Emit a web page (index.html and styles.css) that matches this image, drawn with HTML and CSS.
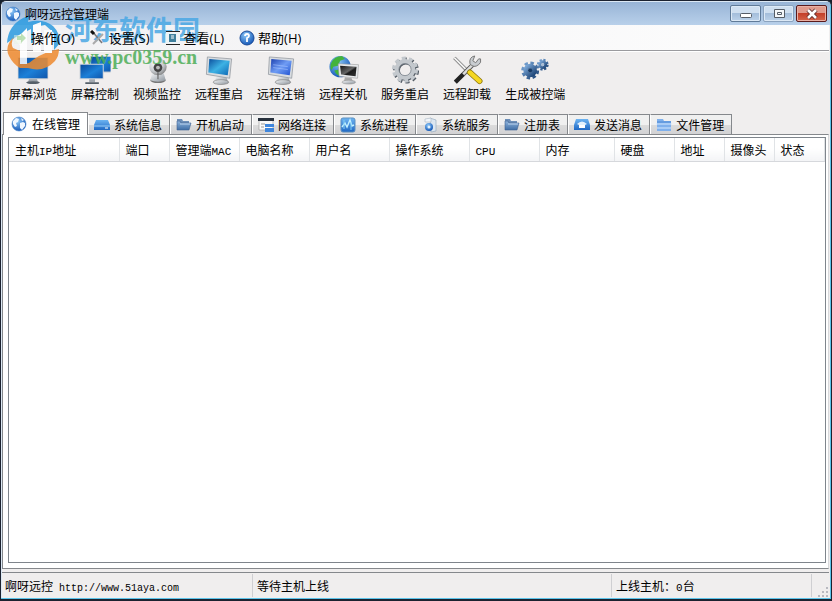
FILE: index.html
```html
<!DOCTYPE html>
<html lang="zh-CN">
<head>
    <meta charset="UTF-8">
    <meta name="viewport" content="width=device-width, initial-scale=1.0">
    <title>啊呀远控管理端</title>
    <link rel="stylesheet" href="styles.css">
</head>
<body>
    <!-- 公用渐变和图标 -->
    <svg class="sprite" aria-hidden="true">
        <defs>
            <linearGradient id="screen" x1="0" y1="0" x2="1" y2="1">
                <stop offset="0" stop-color="#0a4a9c"/>
                <stop offset=".55" stop-color="#1c80d8"/>
                <stop offset="1" stop-color="#0f56ac"/>
            </linearGradient>
            <linearGradient id="aqua" x1="0" y1="0" x2="1" y2="1">
                <stop offset="0" stop-color="#0b4d9c"/>
                <stop offset=".5" stop-color="#3db2e4"/>
                <stop offset="1" stop-color="#0c66b4"/>
            </linearGradient>
            <linearGradient id="indigo" x1="0" y1="0" x2="1" y2="1">
                <stop offset="0" stop-color="#1c3fae"/>
                <stop offset=".5" stop-color="#6f9cf4"/>
                <stop offset="1" stop-color="#1d50d0"/>
            </linearGradient>
            <linearGradient id="dark" x1="0" y1="0" x2="1" y2="1">
                <stop offset="0" stop-color="#111"/>
                <stop offset=".5" stop-color="#666"/>
                <stop offset=".6" stop-color="#1c1c1c"/>
                <stop offset="1" stop-color="#333"/>
            </linearGradient>
            <linearGradient id="silver" x1="0" y1="0" x2="1" y2="1">
                <stop offset="0" stop-color="#f4f6f8"/>
                <stop offset="1" stop-color="#8c949c"/>
            </linearGradient>
            <linearGradient id="folder" x1="0" y1="0" x2="0" y2="1">
                <stop offset="0" stop-color="#8fb4dc"/>
                <stop offset="1" stop-color="#3f6ea6"/>
            </linearGradient>
            <linearGradient id="drive" x1="0" y1="0" x2="0" y2="1">
                <stop offset="0" stop-color="#6db4f2"/>
                <stop offset="1" stop-color="#1f68c4"/>
            </linearGradient>
            <linearGradient id="gear" x1="0" y1="0" x2="1" y2="1">
                <stop offset="0" stop-color="#7aa6d6"/>
                <stop offset="1" stop-color="#1f4678"/>
            </linearGradient>
            <radialGradient id="globe" cx=".4" cy=".3" r=".75">
                <stop offset="0" stop-color="#8cc8f8"/>
                <stop offset="1" stop-color="#0f52b4"/>
            </radialGradient>
            <radialGradient id="ball" cx=".35" cy=".3" r=".8">
                <stop offset="0" stop-color="#fff"/>
                <stop offset=".6" stop-color="#c4c8cc"/>
                <stop offset="1" stop-color="#777"/>
            </radialGradient>
        </defs>
        <symbol id="i-globe" viewBox="0 0 16 16">
            <circle cx="8" cy="8" r="7" fill="url(#globe)" stroke="#4a84c8" stroke-width=".6"/>
            <path d="M2 5l3-3 3 1-1 3-2 1 1 3-2 1-2-3zM9 7l3-1 2 1 0 3-3 4-2-2zM10 2l3 2-2 1z" fill="#f0f7ff"/>
        </symbol>
        <symbol id="i-folder" viewBox="0 0 16 16">
            <path d="M1 2h5l1 2h6v3H1z" fill="#6d8fb8"/>
            <path d="M1 13V4h3l1 2h10l-2 7z" fill="url(#folder)" stroke="#3f6290" stroke-width=".6"/>
            <path d="M4 7h10" stroke="#bcd4ee"/>
        </symbol>
        <symbol id="i-monitor" viewBox="0 0 32 32">
            <path d="M12 24h8l1 4h-10z" fill="#9aa2aa"/>
            <ellipse cx="16" cy="28.500" rx="7" ry="1.500" fill="#555f68"/>
            <path d="M0 2h32v23H0z" fill="#c9ced3"/>
            <path d="M1 3h30v21H1z" fill="url(#screen)"/>
        </symbol>
        <symbol id="i-stand" viewBox="0 0 32 32">
            <path d="M13 22l11 1 1 5-13-1z" fill="url(#silver)"/>
            <ellipse cx="18" cy="28" rx="8" ry="2.500" fill="url(#silver)" stroke="#777" stroke-width=".6"/>
            <path d="M4 2l25 2-2 20L3 20z" fill="#d8dce0" stroke="#888f96" stroke-width=".7"/>
        </symbol>
    </svg>

    <div class="window">
        <header class="titlebar">
            <svg class="icon"><use href="#i-globe"/></svg>
            <h1>啊呀远控管理端</h1>
            <div class="caption-buttons">
                <button type="button" class="caption" aria-label="最小化">
                    <svg viewBox="0 0 16 12"><rect x="2.500" y="5.500" width="11" height="4" rx="1" fill="#fff" stroke="#555c66"/></svg>
                </button>
                <button type="button" class="caption muted" aria-label="最大化">
                    <svg viewBox="0 0 16 12"><path d="M3.500 1.500h10v8h-10zM6.500 4.500h4v2h-4z" fill="#f4f7fa" stroke="#555c66"/></svg>
                </button>
                <button type="button" class="caption close" aria-label="关闭">
                    <svg viewBox="0 0 16 12"><path d="M4 2l8 8M12 2l-8 8" stroke="#5c2a2a" stroke-width="4.400"/><path d="M4 2l8 8M12 2l-8 8" stroke="#fff" stroke-width="2.600"/></svg>
                </button>
            </div>
        </header>

        <nav class="menubar">
            <button type="button">
                <svg class="icon" viewBox="0 0 16 16"><path d="M2 5h8v9H2z" fill="#e8f4e4" opacity=".5"/><path d="M9 3l5 5-5 5v-3H5V6h4z" fill="#a4d498" opacity=".7"/></svg>
                操作(O)
            </button>
            <button type="button">
                <svg class="icon" viewBox="0 0 16 16"><path d="M2 1l10 12" stroke="#777" stroke-width="1.500"/><path d="M13 4L3 14" stroke="#aaa" stroke-width="2"/><path d="M1 1l3 3" stroke="#111" stroke-width="3"/></svg>
                设置(S)
            </button>
            <button type="button">
                <svg class="icon" viewBox="0 0 16 16"><path d="M1 1h14v14H1z" fill="#eef3f6"/><path d="M1 1.500h14M1 14.500h14" stroke="#222"/><path d="M4 4h7v8H4z" fill="#3f7f9c"/><path d="M6 6h3M6 8h3" stroke="#fff"/></svg>
                查看(L)
            </button>
            <button type="button">
                <svg class="icon" viewBox="0 0 16 16"><circle cx="8" cy="8" r="7" fill="url(#globe)" stroke="#1c4c98"/><path d="M6 6q0-2 2-2t2 2q0 1-2 2v4" fill="none" stroke="#fff" stroke-width="1.800"/></svg>
                帮助(H)
            </button>
        </nav>

        <div class="toolbar">
            <button type="button">
                <svg viewBox="0 0 32 32"><use href="#i-monitor"/></svg>
                屏幕浏览
            </button>
            <button type="button">
                <svg viewBox="0 0 32 32">
                    <path d="M11 1h21v17H11z" fill="#b8c4d0"/><path d="M12 2h20v15H12z" fill="url(#screen)"/>
                    <path d="M0 9h25v16H0z" fill="#d0d6dc"/><path d="M1 10h23v14H1z" fill="url(#screen)"/>
                    <path d="M10 25h6v3h-6z" fill="#a2a9b0"/><path d="M6 29h14" stroke="#555f68" stroke-width="2"/>
                </svg>
                屏幕控制
            </button>
            <button type="button">
                <svg viewBox="0 0 32 32">
                    <ellipse cx="17" cy="26" rx="8" ry="3" fill="#777"/><path d="M11 19h12l2 7q-8 3-16 0z" fill="url(#silver)"/>
                    <circle cx="17" cy="12" r="9" fill="url(#ball)"/><circle cx="17" cy="13" r="4.500" fill="#444"/><circle cx="17" cy="13" r="2" fill="#bbb"/>
                    <path d="M17 17v8" stroke="#555"/>
                </svg>
                视频监控
            </button>
            <button type="button">
                <svg viewBox="0 0 32 32"><use href="#i-stand"/><path d="M6 4l21 2-2 15L5 18z" fill="url(#aqua)"/></svg>
                远程重启
            </button>
            <button type="button">
                <svg viewBox="0 0 32 32"><use href="#i-stand"/><path d="M6 4l21 2-2 15L5 18z" fill="url(#indigo)"/><path d="M8 10l15 2M8 13l15 2" stroke="#a9c4ff" stroke-width=".6"/></svg>
                远程注销
            </button>
            <button type="button">
                <svg viewBox="0 0 32 32">
                    <circle cx="13" cy="12" r="11" fill="url(#globe)"/>
                    <path d="M4 8q3-7 11-7l3 3-5 2-2 5-5 1-2 4q-2-4 0-8zM7 16l5-1 2 7q-5-1-7-6z" fill="#43b33c"/>
                    <path d="M11 9l21 1-1 14-19-2z" fill="#e8eaec" stroke="#999" stroke-width=".6"/><path d="M13 11l17 1-1 10-15-2z" fill="url(#dark)"/>
                    <path d="M18 23l7 1 1 3h-9z" fill="#aaa"/><ellipse cx="22" cy="28" rx="7" ry="2" fill="url(#silver)" stroke="#888" stroke-width=".5"/>
                </svg>
                远程关机
            </button>
            <button type="button">
                <svg viewBox="0 0 32 32">
                    <g fill="none" stroke="#555d66">
                        <circle cx="17" cy="16" r="11.500" stroke-width="4" stroke-dasharray="4 3.230"/>
                        <circle cx="17" cy="16" r="8.500" stroke-width="4.500"/>
                    </g>
                    <g fill="none" stroke="#c3c8cd">
                        <circle cx="16" cy="15" r="11.500" stroke-width="4" stroke-dasharray="4 3.230"/>
                        <circle cx="16" cy="15" r="8.500" stroke-width="4.500"/>
                        <circle cx="16" cy="15" r="6.300" stroke="#7a828a" stroke-width=".8"/>
                    </g>
                </svg>
                服务重启
            </button>
            <button type="button">
                <svg viewBox="0 0 32 32">
                    <path d="M3 3l15 15" stroke="#777" stroke-width="3.500"/><path d="M3 3l15 15" stroke="#f2f2f2" stroke-width="2"/>
                    <path d="M4 28L23 9" stroke="#555" stroke-width="4.500"/><path d="M12 20L23 9" stroke="#ddd" stroke-width="2.600"/>
                    <path d="M4 28l8-8" stroke="#222" stroke-width="4"/>
                    <path d="M28 4l-3 4-3-2 2-5q-6 1-5 8 4 5 9 1 3-2 2-6z" fill="#c8ccd0" stroke="#777"/>
                    <path d="M19 18l10 9" stroke="#8a7410" stroke-width="6" stroke-linecap="round"/><path d="M19 18l10 9" stroke="#f5d721" stroke-width="4.500" stroke-linecap="round"/>
                </svg>
                远程卸载
            </button>
            <button type="button">
                <svg viewBox="0 0 32 32">
                    <g fill="none" stroke="url(#gear)">
                        <circle cx="11" cy="16" r="7.500" stroke-width="3.500" stroke-dasharray="3.400 2.490"/><circle cx="11" cy="16" r="4.500" stroke-width="5"/>
                        <circle cx="24" cy="10" r="4.800" stroke-width="2.600" stroke-dasharray="2.200 1.570"/><circle cx="24" cy="10" r="3" stroke-width="3"/>
                    </g>
                    <circle cx="11" cy="16" r="2.200" fill="#163a66"/><circle cx="24" cy="10" r="1.500" fill="#a8bcd4"/>
                </svg>
                生成被控端
            </button>
        </div>

        <div class="tabs" role="tablist">
            <button type="button" role="tab" class="active" aria-selected="true"><svg class="icon"><use href="#i-globe"/></svg>在线管理</button>
            <button type="button" role="tab"><svg class="icon" viewBox="0 0 16 16"><path d="M2 3h12l2 5v5H0V8z" fill="url(#drive)"/><path d="M0 9h16" stroke="#9ad0fa"/><path d="M11 11h3" stroke="#fff"/></svg>系统信息</button>
            <button type="button" role="tab"><svg class="icon"><use href="#i-folder"/></svg>开机启动</button>
            <button type="button" role="tab"><svg class="icon" viewBox="0 0 16 16"><path d="M1 2h14v11H1z" fill="#f8f8f8" stroke="#999" stroke-width=".6"/><path d="M0 1h16v3H0z" fill="#27303c"/><path d="M3 7h4M3 10h3" stroke="#999"/><path d="M7 7h9v3H7zM7 11h9v4H7z" fill="#3f86dc"/></svg>网络连接</button>
            <button type="button" role="tab"><svg class="icon" viewBox="0 0 16 16"><rect x="1" y="1" width="14" height="14" rx="2" fill="url(#drive)" stroke="#5a8fc0"/><path d="M2 10l3-4 2 4 3-7 2 6 2-1" fill="none" stroke="#c4f1ff" stroke-width="1.400"/><path d="M4 3v9M11 5v8" stroke="#83cff2"/></svg>系统进程</button>
            <button type="button" role="tab"><svg class="icon" viewBox="0 0 16 16"><path d="M8 1l6 2v11l-5 1z" fill="#dce6f0" stroke="#8ea4b8" stroke-width=".6"/><path d="M3 2l6-1v4H3z" fill="#f2f6fa" stroke="#a7b6c4" stroke-width=".6"/><circle cx="7" cy="10" r="4" fill="url(#globe)"/><circle cx="7" cy="10" r="1.500" fill="#e4f1fc"/></svg>系统服务</button>
            <button type="button" role="tab"><svg class="icon"><use href="#i-folder"/></svg>注册表</button>
            <button type="button" role="tab"><svg class="icon" viewBox="0 0 16 16"><path d="M2 2h12l2 6v5H0V8z" fill="url(#drive)"/><path d="M3 7q5-5 10 0l-2 1H5z" fill="#e3f1fd"/><path d="M5 8h6v3H5z" fill="#fff"/></svg>发送消息</button>
            <button type="button" role="tab"><svg class="icon" viewBox="0 0 16 16"><path d="M1 2h6l1 2h7v10H1z" fill="#7fb0ec"/><path d="M0 7h16M1 11h14" stroke="#d4e8ff"/><path d="M1 5h14" stroke="#4d88d4"/></svg>文件管理</button>
        </div>

        <main class="page" role="tabpanel">
            <div class="list">
                <table>
                    <colgroup>
                        <col class="w110"><col class="w50"><col class="w70"><col class="w70"><col class="w80"><col class="w80">
                        <col class="w70"><col class="w75"><col class="w60"><col class="w50"><col class="w50"><col>
                    </colgroup>
                    <thead>
                        <tr>
                            <th>主机<span class="latin">IP</span>地址</th>
                            <th>端口</th>
                            <th>管理端<span class="latin">MAC</span></th>
                            <th>电脑名称</th>
                            <th>用户名</th>
                            <th>操作系统</th>
                            <th><span class="latin">CPU</span></th>
                            <th>内存</th>
                            <th>硬盘</th>
                            <th>地址</th>
                            <th>摄像头</th>
                            <th>状态</th>
                        </tr>
                    </thead>
                    <tbody></tbody>
                </table>
            </div>
        </main>

        <footer class="statusbar">
            <div class="status-site">啊呀远控<span class="latin url"> http://www.51aya.com</span></div>
            <div class="status-message">等待主机上线</div>
            <div class="status-count">上线主机：<span class="latin">0</span>台</div>
            <svg class="grip" viewBox="0 0 12 12"><path d="M9 2h2v2H9zM5 6h2v2H5zM9 6h2v2H9zM1 10h2v2H1zM5 10h2v2H5zM9 10h2v2H9z" fill="#b9b9c0"/></svg>
        </footer>

        <!-- 水印 -->
        <div class="watermark">
            <svg viewBox="0 0 58 60">
                <path d="M2 30Q3 13 18 5l10-4q-5 5-5 8 15-4 25 4 7 7 7 17l-6 7V20l-9-8-10 2v16h-4V16L14 22z" fill="#2b9be0"/>
                <path d="M9 24Q-1 33 4 43q4 8 11 12h8q16 5 27-7 4-5 4-12l-8 2q-11 3-22 12l-9 1V38l-7-3q-3-5 1-11z" fill="#ee8a2e"/>
                <path d="M10 27l12-12v36h-7V32zM28 12l8-3v29h-8zM39 17h8v23h-8z" fill="#fff"/>
            </svg>
            <div>
                <strong>河东软件园</strong>
                <span>www.pc0359.cn</span>
            </div>
        </div>
    </div>
</body>
</html>
```
FILE: styles.css
```css
* {
    margin: 0;
    padding: 0;
    box-sizing: border-box;
}

body {
    font-family: "Noto Sans CJK SC", sans-serif;
    font-size: 12px;
    line-height: 16px;
    color: #000;
    background: #16202c;
}

button {
    font: inherit;
    color: inherit;
    background: none;
    border: none;
}

svg {
    display: block;
    flex-shrink: 0;
}

.sprite {
    position: absolute;
    width: 0;
    height: 0;
}

.icon {
    width: 16px;
    height: 16px;
}

.latin {
    font-family: "Liberation Mono", monospace;
    font-size: 11px;
    line-height: 12px;
    white-space: pre;
}

.latin.url {
    font-size: 10px;
}

.window {
    position: relative;
    display: flex;
    flex-direction: column;
    min-height: 100vh;
    background: #f0eeee;
    border: 1px solid #1b2230;
    border-bottom-width: 2px;
    border-radius: 6px 6px 0 0;
    box-shadow: inset -1px -1px 0 #5cc4ea, inset 1px 1px 0 #dce8f4;
    padding: 1px 2px 2px 1px;
    overflow: hidden;
}

/* 标题栏 */
.titlebar {
    display: flex;
    align-items: center;
    gap: 4px;
    height: 23px;
    margin-right: -1px;
    padding: 0 3px;
    background: linear-gradient(#98b4d6, #b8d0ea);
}

.titlebar h1 {
    position: relative;
    z-index: 1;
    flex: 1;
    font-size: 12px;
    font-weight: 400;
}

.caption-buttons {
    display: flex;
    gap: 2px;
}

.caption {
    display: flex;
    align-items: center;
    justify-content: center;
    width: 31px;
    height: 17px;
    border: 1px solid #5f7a98;
    border-radius: 2px;
    background: linear-gradient(#cfdff0 50%, #a4bedb 50%, #bcd2ea);
    box-shadow: inset 0 0 0 1px #dce9f6;
}

.caption svg {
    width: 16px;
    height: 12px;
}

.caption.muted {
    border-color: #8aa2be;
}

.caption.close {
    border-color: #5a1a1c;
    background: linear-gradient(#e09a8c 50%, #c4402a 50%, #d4664c);
    box-shadow: inset 0 0 0 1px #eab0a4;
}

/* 菜单 */
.menubar {
    display: flex;
    gap: 15px;
    height: 26px;
    padding: 0 10px;
    background: linear-gradient(90deg, #f1f1f3, #fdfdfd);
    border-bottom: 1px solid #9a9a9e;
}

.menubar button {
    position: relative;
    z-index: 1;
    display: flex;
    align-items: center;
    gap: 3px;
    font-family: "Open Sans", "Noto Sans CJK SC", sans-serif;
    font-size: 13px;
}

/* 工具栏 */
.toolbar {
    display: flex;
    height: 62px;
    padding-top: 3px;
    border-top: 1px solid #fff;
}

.toolbar button {
    display: flex;
    flex-direction: column;
    align-items: center;
    padding: 0 7px;
    white-space: nowrap;
}

.toolbar svg {
    width: 32px;
    height: 31px;
}

/* 选项卡 */
.tabs {
    position: relative;
    display: flex;
    align-items: flex-end;
    padding-left: 1px;
    height: 21px;
}

.tabs button {
    display: flex;
    align-items: center;
    gap: 4px;
    height: 20px;
    padding: 1px 7px 0 5px;
    border: 1px solid #85888c;
    border-bottom: none;
    border-left-color: #fff;
    background: linear-gradient(#f0f0f0 50%, #dcdcdc 50%, #d2d2d4);
    white-space: nowrap;
}

.tabs .active {
    height: 23px;
    margin-bottom: -1px;
    padding: 0 7px;
    gap: 5px;
    border-left-color: #85888c;
    background: #fff;
}

.page {
    flex: 1;
    display: flex;
    padding: 2px 2px 5px 5px;
    background: #fff;
    border: 1px solid #85888c;
    border-right-color: #d8d8da;
}

.list {
    flex: 1;
    border: 1px solid #7f858c;
    background: #fff;
}

table {
    width: 100%;
    table-layout: fixed;
    border-collapse: collapse;
}

th {
    height: 23px;
    padding: 2px 0 0 6px;
    font-weight: 400;
    text-align: left;
    white-space: nowrap;
    border-right: 1px solid #e0e3e6;
    border-bottom: 1px solid #d6d8dc;
    background: linear-gradient(#fff 45%, #f3f4f6);
}

.w50 { width: 50px; }
.w60 { width: 60px; }
.w70 { width: 70px; }
.w75 { width: 75px; }
.w80 { width: 80px; }
.w110 { width: 110px; }

/* 状态栏 */
.statusbar {
    display: flex;
    align-items: stretch;
    height: 25px;
    margin-top: 3px;
    border-top: 1px solid #85888c;
}

.statusbar div {
    margin-top: 1px;
    padding: 4px 0 0 4px;
    border-right: 1px solid #cfcfd2;
    white-space: nowrap;
}

.statusbar .status-site {
    width: 251px;
    padding-left: 3px;
}

.status-message {
    flex: 1;
}

.status-count {
    width: 200px;
}

.grip {
    width: 12px;
    height: 12px;
    margin-left: 5px;
    align-self: flex-end;
}

/* 水印 */
.watermark {
    position: absolute;
    top: 12px;
    left: 4px;
    display: flex;
    gap: 2px;
    opacity: 0.85;
    pointer-events: none;
}

.watermark svg {
    width: 58px;
    height: 60px;
}

.watermark strong,
.watermark span {
    display: block;
    white-space: nowrap;
}

.watermark strong {
    font-size: 27px;
    line-height: 32px;
    font-weight: 700;
    color: #4aa8e4;
}

.watermark span {
    font-family: "Liberation Serif", serif;
    font-size: 20px;
    line-height: 24px;
    font-weight: 700;
    color: #4fae58;
}
```
